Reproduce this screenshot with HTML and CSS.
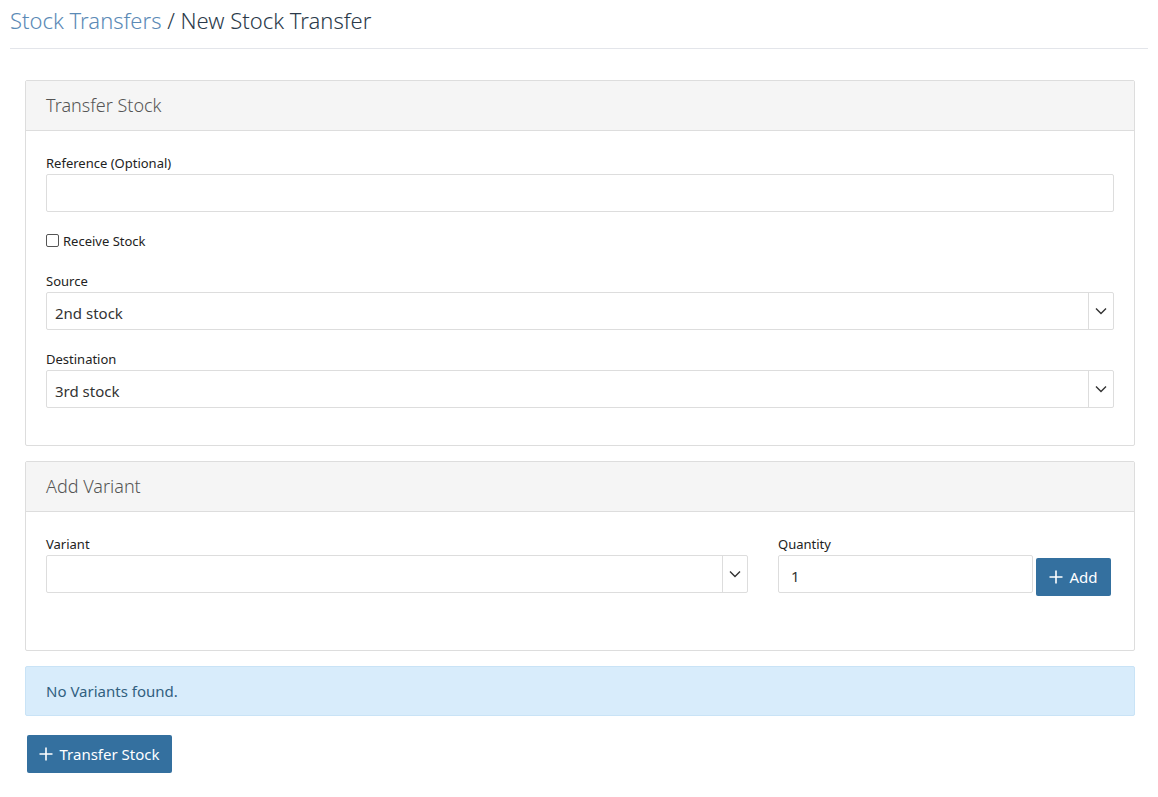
FILE: index.html
```html
<!DOCTYPE html>
<html>
<head>
<meta charset="utf-8">
<link rel="stylesheet" href="styles.css">
</head>
<body>
<div class="page">
  <header class="page-header">
    <h1><a class="crumb" href="#">Stock Transfers</a> / New Stock Transfer</h1>
  </header>
  <main class="content">
    <section class="panel panel-transfer">
      <div class="panel-heading">Transfer Stock</div>
      <div class="panel-body">
        <div class="field field-ref">
          <label class="label">Reference (Optional)</label>
          <div class="input"></div>
        </div>
        <label class="check"><span class="box"></span>Receive Stock</label>
        <div class="field field-source">
          <label class="label">Source</label>
          <div class="select"><span class="value">2nd stock</span><span class="caret"><svg width="12" height="8" viewBox="0 0 12 8"><path d="M1 1.5 L6 6.5 L11 1.5" fill="none" stroke="#333" stroke-width="1.4"/></svg></span></div>
        </div>
        <div class="field field-dest">
          <label class="label">Destination</label>
          <div class="select"><span class="value">3rd stock</span><span class="caret"><svg width="12" height="8" viewBox="0 0 12 8"><path d="M1 1.5 L6 6.5 L11 1.5" fill="none" stroke="#333" stroke-width="1.4"/></svg></span></div>
        </div>
      </div>
    </section>

    <section class="panel panel-variant">
      <div class="panel-heading">Add Variant</div>
      <div class="panel-body variant-row">
        <div class="field col-variant">
          <label class="label">Variant</label>
          <div class="select"><span class="value"></span><span class="caret"><svg width="12" height="8" viewBox="0 0 12 8"><path d="M1 1.5 L6 6.5 L11 1.5" fill="none" stroke="#333" stroke-width="1.4"/></svg></span></div>
        </div>
        <div class="field col-qty">
          <label class="label">Quantity</label>
          <div class="qty-row">
            <div class="input qty"><span class="value">1</span></div>
            <button class="btn btn-add"><svg width="14" height="14" viewBox="0 0 14 14"><path d="M7 0.5 V13.5 M0.5 7 H13.5" stroke="#fff" stroke-width="1.6"/></svg>Add</button>
          </div>
        </div>
      </div>
    </section>

    <div class="alert">No Variants found.</div>

    <button class="btn btn-submit"><svg width="14" height="14" viewBox="0 0 14 14"><path d="M7 0.5 V13.5 M0.5 7 H13.5" stroke="#fff" stroke-width="1.6"/></svg>Transfer Stock</button>
  </main>
</div>
</body>
</html>
```

FILE: styles.css
```css
* { box-sizing: border-box; }
html, body { margin: 0; padding: 0; background: #fff; }
body {
  font-family: "Noto Sans", "Open Sans", sans-serif;
  color: #333;
  font-size: 14px;
}
.page { padding: 0 10px; }
.page-header {
  border-bottom: 1px solid #e3e5ea;
  height: 49px;
  padding-top: 4px;
}
.page-header h1 {
  margin: 0;
  font-size: 22px;
  font-weight: 300;
  line-height: 32px;
  color: #2b3a4a;
}
.crumb { color: #5b8ab6; text-decoration: none; }
.content { padding: 31px 13px 0 15px; }
.panel {
  border: 1px solid #ddd;
  border-radius: 2px;
  background: #fff;
}
.panel-heading {
  background: #f5f5f5;
  border-bottom: 1px solid #ddd;
  height: 50px;
  line-height: 48px;
  padding: 0 20px;
  font-size: 18px;
  font-weight: 300;
  color: #555;
}
.panel-body { padding: 23px 20px 37px; }
.label {
  display: block;
  font-size: 13px;
  line-height: 18px;
  margin-bottom: 2px;
  color: #222;
}
.input, .select {
  height: 38px;
  border: 1px solid #ddd;
  border-radius: 2px;
  background: #fff;
  display: flex;
  align-items: center;
}
.select .value, .input .value {
  flex: 1;
  padding-left: 8px;
  padding-top: 3px;
  font-size: 15px;
  color: #333;
}
.input .value { padding-left: 12px; }
.caret {
  width: 25px;
  align-self: stretch;
  border-left: 1px solid #ddd;
  display: flex;
  align-items: center;
  justify-content: center;
}
.check {
  display: flex;
  align-items: center;
  margin-top: 20px;
  font-size: 13px;
  line-height: 18px;
  color: #222;
}
.box {
  width: 13px;
  height: 13px;
  border: 1px solid #555;
  border-radius: 2px;
  margin-right: 4px;
  margin-top: -2px;
}
.field-source { margin-top: 22px; }
.field-dest { margin-top: 20px; }
.panel-variant { margin-top: 15px; }
.variant-row {
  display: flex;
  gap: 30px;
  padding-top: 23px;
  padding-bottom: 54px;
}
.col-variant { width: 702px; }
.col-qty { flex: 1; }
.qty-row { display: flex; gap: 3px; align-items: flex-start; }
.qty { width: 255px; }
.btn {
  display: inline-flex;
  align-items: center;
  justify-content: center;
  gap: 6px;
  background: #34709f;
  color: #fff;
  border: none;
  border-radius: 2px;
  font-family: inherit;
  font-size: 15px;
  height: 38px;
  padding: 0 12px;
  white-space: nowrap;
}
.btn-add { margin-top: 3px; width: 75px; }
.alert {
  margin-top: 15px;
  height: 50px;
  line-height: 48px;
  background: #d8ecfb;
  border: 1px solid #c9e3f6;
  border-radius: 2px;
  padding: 0 20px;
  font-size: 15px;
  color: #31607f;
}
.btn-submit { margin-top: 19px; margin-left: 2px; width: 145px; }
```
